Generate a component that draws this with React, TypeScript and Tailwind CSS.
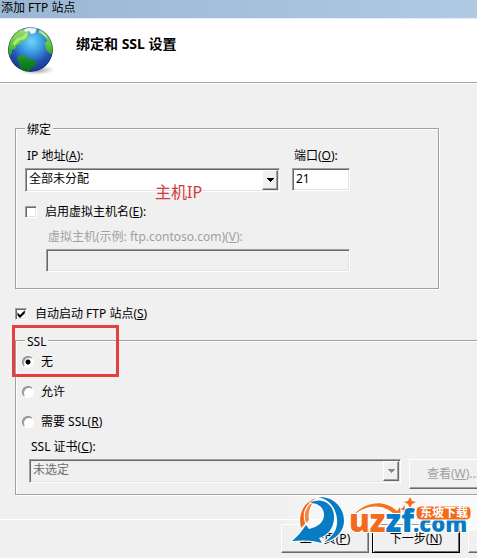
import React, { useState } from 'react';

const sunken = 'border border-t-[#a0a0a0] border-l-[#a0a0a0] border-r-white border-b-white shadow-[inset_1px_1px_0_#696969,inset_-1px_-1px_0_#e3e3e3]';
const raised = 'border border-t-white border-l-white border-r-[#696969] border-b-[#696969] shadow-[inset_-1px_-1px_0_#a0a0a0]';
const group = 'border border-[#a0a0a0] shadow-[1px_1px_0_#fff,inset_1px_1px_0_#fff]';

type ComboProps = {
  id: string;
  value: string;
  disabled?: boolean;
};

function Combo({ id, value, disabled }: ComboProps) {
  return (
    <div className="relative">
      <select
        id={id}
        disabled={disabled}
        className={`block h-6 w-full appearance-none rounded-none pl-[3px] pr-5 pb-0.5 text-[12px] leading-4 opacity-100 outline-none ${sunken} ${disabled ? 'bg-[#f0f0f0] text-[#6d6d6d]' : 'bg-white text-black'}`}
      >
        <option>{value}</option>
      </select>
      <span className={`pointer-events-none absolute top-0.5 right-0.5 bottom-0.5 flex w-4 items-center justify-center bg-[#f0f0f0] ${raised}`}>
        <svg width="7" height="4" viewBox="0 0 7 4" shapeRendering="crispEdges">
          <path d="M0 0h7v1H6v1H5v1H4v1H3V3H2V2H1V1H0z" fill={disabled ? '#8a8a8a' : '#000'} />
        </svg>
      </span>
    </div>
  );
}

type CheckProps = {
  id: string;
  checked: boolean;
  onChange: (checked: boolean) => void;
  children: React.ReactNode;
};

function Check({ id, checked, onChange, children }: CheckProps) {
  return (
    <div className="flex h-4 items-center gap-2">
      <span className="relative h-3 w-3">
        <input
          id={id}
          type="checkbox"
          checked={checked}
          onChange={(e) => onChange(e.target.checked)}
          className={`block h-3 w-3 appearance-none bg-white ${sunken}`}
        />
        {checked && (
          <svg className="pointer-events-none absolute inset-0" width="12" height="12" viewBox="0 0 12 12">
            <path d="M2.500 4.500v3l2.500 2.500L9.800 5.200V2.200L5 7z" fill="#000" />
          </svg>
        )}
      </span>
      <label htmlFor={id}>{children}</label>
    </div>
  );
}

function Globe() {
  return (
    <svg className="shrink-0" width="48" height="50" viewBox="0 0 48 50">
      <defs>
        <radialGradient id="sea" cx="52%" cy="32%" r="68%">
          <stop offset="0" stopColor="#6fd6f8" />
          <stop offset="0.35" stopColor="#3c9fe2" />
          <stop offset="0.7" stopColor="#2450b4" />
          <stop offset="1" stopColor="#1c3590" />
        </radialGradient>
        <linearGradient id="land" x1="0" y1="0" x2="0" y2="45" gradientUnits="userSpaceOnUse">
          <stop offset="0" stopColor="#a5df7b" />
          <stop offset="0.4" stopColor="#5cc93a" />
          <stop offset="0.75" stopColor="#128a20" />
          <stop offset="1" stopColor="#0a6a1a" />
        </linearGradient>
        <radialGradient id="shade">
          <stop offset="0" stopColor="#555" stopOpacity="0.7" />
          <stop offset="1" stopColor="#999" stopOpacity="0" />
        </radialGradient>
        <clipPath id="ball">
          <circle cx="22.500" cy="22.500" r="22.500" />
        </clipPath>
      </defs>
      <ellipse cx="28" cy="43" rx="19" ry="5" fill="url(#shade)" />
      <g clipPath="url(#ball)">
        <circle cx="22.500" cy="22.500" r="22.500" fill="url(#sea)" />
        <g fill="url(#land)">
          <path d="M0 28C0 13 5 5 13 2l7 1 1 3-2 2 2 2-3 3-4 1-1 3-4 1-2 4-3 1v3l-2 3z" />
          <path d="M9 31l3-3 5 1 3 2 5 2 4 2-1 3-4 3-3 3-4 1-5-4-1-5z" />
          <path d="M31 2l6 3 5 6 1 4-4-2-3-4-5-3z" />
          <path d="M37 16l3-3 5 4v9l-3 1-4-4z" />
        </g>
        <path d="M16 2l6-2 7 1-2 5-4 1-2-3-4 1z" fill="#e8f6ee" />
        <path d="M5 16l4-5 5-1 4-4 2 1-3 5-5 1-3 3-3 3z" fill="#c2ee90" opacity="0.8" />
        <path d="M31 3l5 3 4 5-4-2z" fill="#cdeebb" opacity="0.7" />
        <circle cx="22.500" cy="22.500" r="22" fill="none" stroke="#1a3279" strokeOpacity="0.45" />
      </g>
    </svg>
  );
}

function Watermark() {
  return (
    <svg className="pointer-events-none absolute right-0 bottom-0" width="193" height="68" viewBox="0 0 193 68">
      <defs>
        <linearGradient id="fade" x1="0" y1="0" x2="1" y2="0">
          <stop offset="0" stopColor="#fff" stopOpacity="0" />
          <stop offset="0.2" stopColor="#fff" stopOpacity="0.5" />
          <stop offset="1" stopColor="#fff" stopOpacity="0.7" />
        </linearGradient>
      </defs>
      <rect y="5" width="193" height="36" fill="url(#fade)" />
      {/* swoosh */}
      <g stroke="#fff" strokeWidth="2" paintOrder="stroke" strokeLinejoin="round">
        <path d="M17 38C14 26 18 13 32 8c-8 6-12 15-11 26z" fill="#f26b1d" />
        <path d="M22 33C19 24 22 16 30 11c-5 7-6 13-5 19z" fill="#f58a3c" />
        <path d="M34 7c15-1 26 10 26 24 0 10-8 19-20 21 9-5 14-13 13-23-1-11-8-20-19-22z" fill="#087bc5" />
        <path d="M26 13c13-7 25 2 24 16-1 10-6 16-15 19l3 5c-10-3-19-3-30-2 6-5 10-10 14-16l3 4c9-2 15-7 15-14 0-7-5-12-14-12z" fill="#087bc5" />
      </g>
      {/* arc with arrow head and sparks */}
      <path d="M69 26c11-15 32-17 44-5l3-4 1 10-12-1 4-3c-11-9-27-9-40 3z" fill="#f4731f" stroke="#fff" strokeWidth="2" paintOrder="stroke" />
      <path d="M126 7l2 4 4 1-4 2-2 4-2-4-4-2 4-1zM120 15l1 3 3 1-3 1-1 3-1-3-3-1 3-1zM128 16l1 2 2 1-2 1-1 2-1-2-2-1 2-1z" fill="#f26b1d" />
      <g
        fontFamily="'Open Sans', 'Noto Sans', sans-serif"
        fontWeight="800"
        fontSize="31"
        stroke="#fff"
        strokeWidth="2"
        strokeLinejoin="round"
        paintOrder="stroke"
      >
        <text x="65" y="42" fill="#f26b1d">uz<tspan fill="#087bc5">zf</tspan></text>
        <text x="129" y="42" fontSize="22" fill="#087bc5">.com</text>
      </g>
      <rect x="132" y="16" width="55" height="14" rx="5" fill="#f26b1d" stroke="#fff" />
      <text x="136" y="27" fontFamily="'Noto Sans CJK SC', sans-serif" fontWeight="700" fontSize="12" fill="#fff">东坡下载</text>
    </svg>
  );
}

const sslModes = [
  { id: 'none', label: <>无</> },
  { id: 'allow', label: <>允许</> },
  { id: 'require', label: <>需要 SSL(<u>R</u>)</> },
];

function App() {
  const [useHost, setUseHost] = useState(false);
  const [autoStart, setAutoStart] = useState(true);
  const [ssl, setSsl] = useState('none');
  const [port, setPort] = useState('21');

  return (
    <div className="relative flex min-h-screen flex-col overflow-hidden bg-[#f0f0f0] font-['Noto_Sans','Noto_Sans_CJK_SC',sans-serif] text-[12px] leading-4 text-black">
      {/* Title bar */}
      <div className="h-[18px] bg-linear-to-r from-[#9bb6d3] to-[#b0cae5] pl-px">添加 FTP 站点</div>

      {/* Header */}
      <header className="flex h-[65px] border-b border-[#a0a0a0] border-t border-t-[#e4edf6] bg-white pt-2 pl-2 shadow-[0_1px_0_#fff]">
        <Globe />
        <h1 className="pt-[7px] pl-5 text-[14px] leading-5 font-bold">绑定和 SSL 设置</h1>
      </header>

      <main className="pt-[34px] pl-[15px]">
        {/* Binding */}
        <fieldset className={`mr-[38px] pb-4 pl-[9px] ${group}`}>
          <legend className="bg-[#f0f0f0] px-0.5 pt-1 leading-[18px]">绑定</legend>
          <div className="flex gap-3 pt-[9px]">
            <div className="relative w-[255px]">
              <label htmlFor="ip" className="mb-1 block pl-0.5">IP 地址(<u>A</u>):</label>
              <Combo id="ip" value="全部未分配" />
              <span className="pointer-events-none absolute top-[34px] left-[130px] text-[16px] leading-5 text-[#d03c3c]">主机IP</span>
            </div>
            <div className="w-[58px]">
              <label htmlFor="port" className="mb-1 block pl-0.5">端口(<u>O</u>):</label>
              <input
                id="port"
                value={port}
                onChange={(e) => setPort(e.target.value)}
                className={`block h-[23px] w-full bg-white pl-[3px] pb-0.5 outline-none ${sunken}`}
              />
            </div>
          </div>
          <div className="pt-3">
            <Check id="use-host" checked={useHost} onChange={setUseHost}>启用虚拟主机名(<u>E</u>):</Check>
          </div>
          <div className="w-[325px] pt-[9px] pl-[21px]">
            <label htmlFor="host" className="mb-1 block pl-0.5 text-[#a0a0a0]">虚拟主机(示例: ftp.contoso.com)(<u>V</u>):</label>
            <input id="host" disabled={!useHost} className={`block h-[23px] w-full bg-[#f0f0f0] pl-[3px] ${sunken}`} />
          </div>
        </fieldset>

        <div className="pt-[17px]">
          <Check id="auto-start" checked={autoStart} onChange={setAutoStart}>自动启动 FTP 站点(<u>S</u>)</Check>
        </div>

        {/* SSL */}
        <div className="relative pt-[7px]">
          <fieldset className={`-mr-10 pb-[5px] pl-1.5 ${group}`}>
            <legend className="ml-[3px] bg-[#f0f0f0] px-0.5 pt-1 leading-[18px]">SSL</legend>
            <div className="flex flex-col gap-3.5 pt-[3px]">
              {sslModes.map((mode) => (
                <div key={mode.id} className="flex h-4 items-center gap-[7px]">
                  <input
                    id={mode.id}
                    type="radio"
                    name="ssl"
                    checked={ssl === mode.id}
                    onChange={() => setSsl(mode.id)}
                    className="h-3 w-3 appearance-none rounded-full border border-t-[#808080] border-l-[#808080] border-r-white border-b-white bg-white shadow-[inset_1px_1px_0_#a0a0a0] checked:bg-[radial-gradient(circle,#000_2px,#fff_3px)]"
                  />
                  <label htmlFor={mode.id}>{mode.label}</label>
                </div>
              ))}
            </div>
            <div className="flex gap-2 pt-[9px] pl-[7px]">
              <div className="w-[372px] shrink-0">
                <label htmlFor="cert" className="mb-1 block pl-0.5">SSL 证书(<u>C</u>):</label>
                <Combo id="cert" value="未选定" disabled />
              </div>
              <button type="button" disabled className={`mt-5 h-[30px] w-[88px] shrink-0 text-[#a0a0a0] ${raised}`}>查看(<u>W</u>)...</button>
            </div>
          </fieldset>
          <div className="pointer-events-none absolute top-[3px] -left-[3px] h-[52px] w-[107px] border-3 border-[#e44040]" />
        </div>
      </main>

      {/* Wizard buttons */}
      <footer className="mt-6 border-t border-white pt-1">
        <div className="-mr-[79px] flex justify-end">
          <button type="button" className={`mr-[3px] h-[29px] w-[88px] ${raised}`}>上一页(<u>P</u>)</button>
          <button type="button" className="mr-2 h-[29px] w-[88px] border border-black shadow-[inset_1px_1px_0_#fff,inset_-1px_-1px_0_#696969]">下一步(<u>N</u>)</button>
          <button type="button" aria-label="Finish" className={`h-[29px] w-[88px] ${raised}`} />
        </div>
      </footer>

      <Watermark />
    </div>
  );
}

export default App;
